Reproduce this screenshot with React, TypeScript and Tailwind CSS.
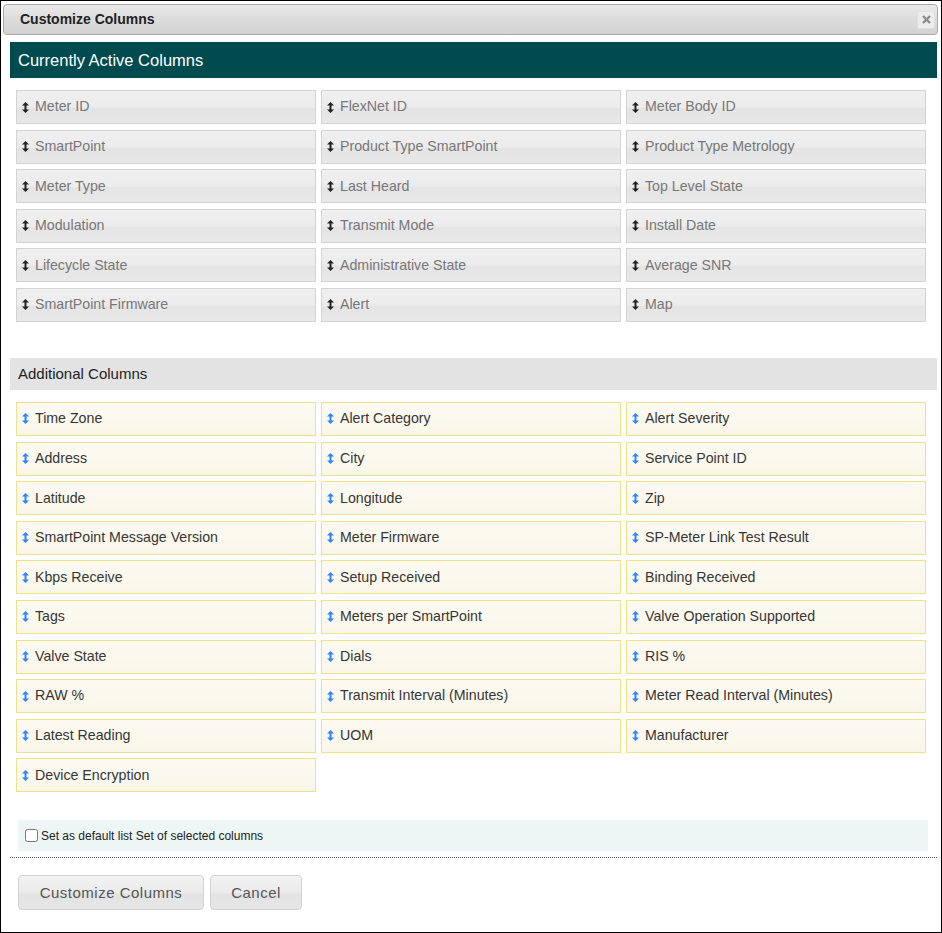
import React from 'react';

const active = [
  'Meter ID', 'FlexNet ID', 'Meter Body ID',
  'SmartPoint', 'Product Type SmartPoint', 'Product Type Metrology',
  'Meter Type', 'Last Heard', 'Top Level State',
  'Modulation', 'Transmit Mode', 'Install Date',
  'Lifecycle State', 'Administrative State', 'Average SNR',
  'SmartPoint Firmware', 'Alert', 'Map',
];

const additional = [
  'Time Zone', 'Alert Category', 'Alert Severity',
  'Address', 'City', 'Service Point ID',
  'Latitude', 'Longitude', 'Zip',
  'SmartPoint Message Version', 'Meter Firmware', 'SP-Meter Link Test Result',
  'Kbps Receive', 'Setup Received', 'Binding Received',
  'Tags', 'Meters per SmartPoint', 'Valve Operation Supported',
  'Valve State', 'Dials', 'RIS %',
  'RAW %', 'Transmit Interval (Minutes)', 'Meter Read Interval (Minutes)',
  'Latest Reading', 'UOM', 'Manufacturer',
  'Device Encryption',
];

// small up/down arrow, like the jQuery UI arrowthick-2-n-s icon
function SortIcon({ color }: { color: string }) {
  return (
    <svg width="7" height="11" viewBox="0 0 7 11" className="shrink-0">
      <path d="M3.5 0 L7 3.5 L0 3.5 Z" fill={color} />
      <rect x="2.5" y="3" width="2" height="5" fill={color} />
      <path d="M3.5 11 L7 7.5 L0 7.5 Z" fill={color} />
    </svg>
  );
}

function ActiveItem({ label }: { label: string }) {
  return (
    <div className="h-[34px] flex items-center gap-[6px] pl-[5px] border border-[#d3d3d3] bg-[linear-gradient(#efefef,#ececec_50%,#e4e4e4_55%,#e8e8e8)] text-[14.2px] text-[#777]">
      <SortIcon color="#222" />
      <span>{label}</span>
    </div>
  );
}

function AdditionalItem({ label }: { label: string }) {
  return (
    <div className="h-[34px] flex items-center gap-[6px] pl-[5px] border border-[#f0e08a] bg-[linear-gradient(#fcfaf1,#fbf9ee_50%,#f8f6e8)] text-[14.2px] text-[#363636]">
      <SortIcon color="#2e83ff" />
      <span>{label}</span>
    </div>
  );
}

export default function App() {
  return (
    <div className="w-[942px] h-[933px] border border-black bg-white font-['Liberation_Sans',Arial,sans-serif] overflow-hidden">
      {/* title bar */}
      <div className="mt-[3px] ml-[2px] mr-[3px] h-[31px] flex items-center justify-between pl-[16px] pr-[2px] border border-[#aaa] rounded-[4px] bg-[linear-gradient(#e9e9e9,#dadada_60%,#d2d2d2)]">
        <span className="text-[14px] font-bold text-[#222]">Customize Columns</span>
        <button className="w-[18px] h-[18px] flex items-center justify-center rounded-[2px] bg-[#ececec] border border-[#e0e0e0]">
          <svg width="9" height="9" viewBox="0 0 9 9">
            <path d="M1 1 L8 8 M8 1 L1 8" stroke="#8a8a8a" strokeWidth="2.4" />
          </svg>
        </button>
      </div>

      <div className="ml-[9px] mr-[4px] mt-[7px]">
        <div className="h-[36px] flex items-center pl-[8px] bg-[#004b50] text-white text-[16.5px]">
          Currently Active Columns
        </div>

        <div className="ml-[6px] mt-[12px] grid grid-cols-[300px_300px_300px] gap-x-[5px] gap-y-[5.6px]">
          {active.map((c) => (
            <ActiveItem key={c} label={c} />
          ))}
        </div>

        <div className="mt-[36px] h-[32px] flex items-center pl-[8px] bg-[#e3e3e3] text-[15px] text-[#222]">
          Additional Columns
        </div>

        <div className="ml-[6px] mt-[12px] grid grid-cols-[300px_300px_300px] gap-x-[5px] gap-y-[5.6px]">
          {additional.map((c) => (
            <AdditionalItem key={c} label={c} />
          ))}
        </div>

        <div className="mt-[28px] ml-[8px] mr-[9px] h-[31px] flex items-center pl-[7px] bg-[#eef5f5] text-[12px] text-[#222]">
          <input type="checkbox" className="w-[13px] h-[13px] mr-[3px] m-0" />
          <span>Set as default list Set of selected columns</span>
        </div>

        <div className="mt-[6px] border-t border-dotted border-[#555]" />

        <div className="mt-[17px] ml-[8px] flex gap-[6px]">
          <button className="w-[186px] h-[35px] rounded-[4px] border border-[#d3d3d3] bg-[linear-gradient(#f2f2f2,#ebebeb_50%,#e3e3e3_55%,#e6e6e6)] text-[15px] text-[#555] tracking-[0.5px]">
            Customize Columns
          </button>
          <button className="w-[92px] h-[35px] rounded-[4px] border border-[#d3d3d3] bg-[linear-gradient(#f2f2f2,#ebebeb_50%,#e3e3e3_55%,#e6e6e6)] text-[15px] text-[#555] tracking-[0.5px]">
            Cancel
          </button>
        </div>
      </div>
    </div>
  );
}
